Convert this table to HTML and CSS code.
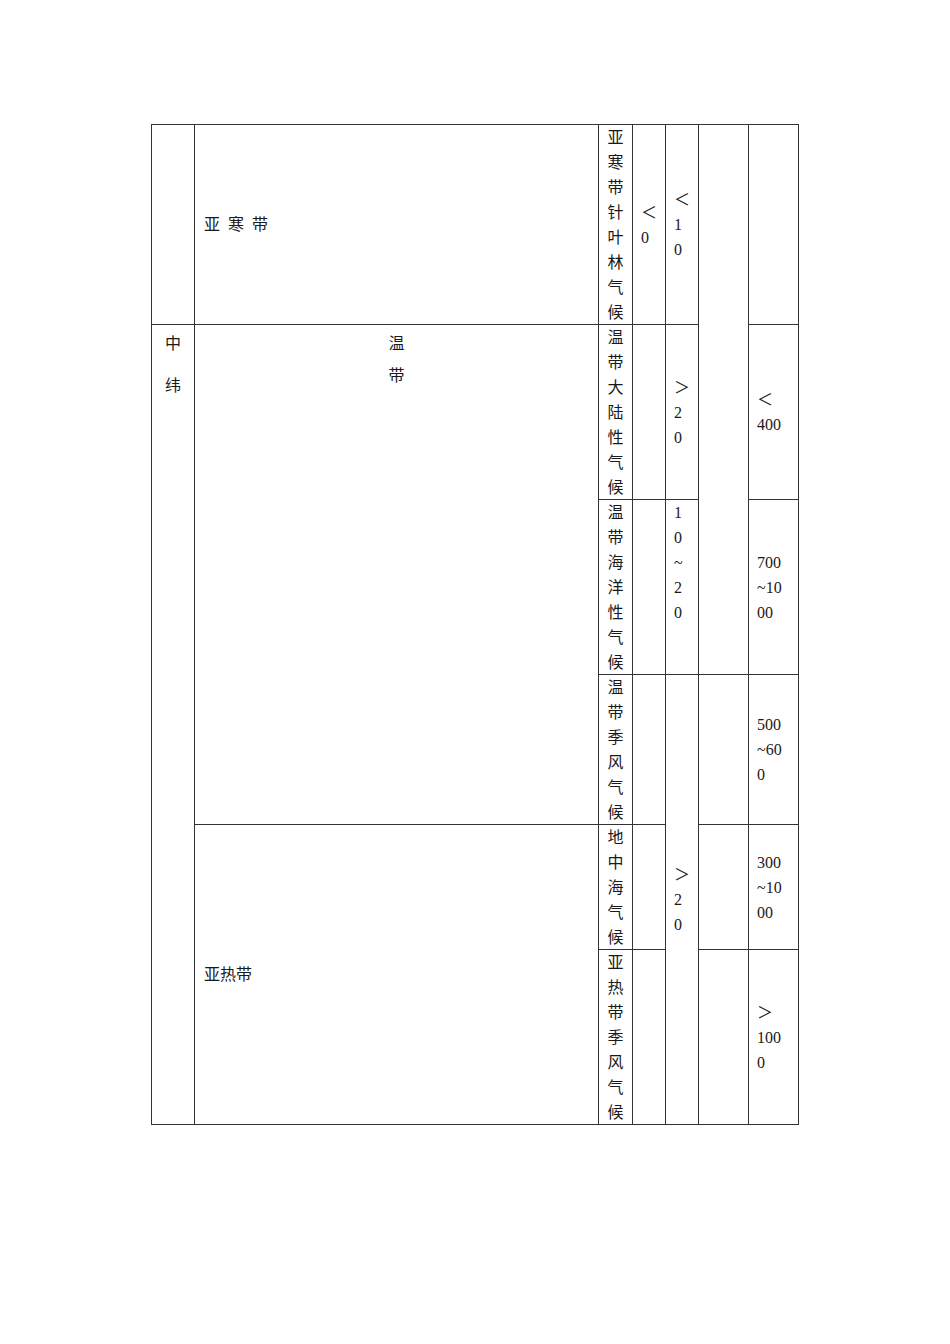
FILE: index.html
```html
<!DOCTYPE html>
<html lang="zh">
<head>
<meta charset="utf-8">
<title>气候类型表</title>
<link rel="stylesheet" href="styles.css">
</head>
<body>
<div class="page">
  <table class="climate-table">
    <colgroup>
      <col class="c-lat">
      <col class="c-zone">
      <col class="c-type">
      <col class="c-n1">
      <col class="c-n2">
      <col class="c-n3">
      <col class="c-n4">
    </colgroup>
    <tr class="r1">
      <td></td>
      <td class="zone mid"><span class="spaced">亚 寒 带</span></td>
      <td class="type"><div class="vt">亚寒带针叶林气候</div></td>
      <td class="num mid">＜<br>0</td>
      <td class="num mid">＜<br>1<br>0</td>
      <td rowspan="3"></td>
      <td></td>
    </tr>
    <tr class="r2">
      <td rowspan="5" class="lat top"><p class="l1">中</p><p class="l2">纬</p></td>
      <td rowspan="3" class="zone top center"><p class="w1">温</p><p class="w2">带</p></td>
      <td class="type"><div class="vt">温带大陆性气候</div></td>
      <td></td>
      <td class="num mid">＞<br>2<br>0</td>
      <td class="num mid">＜<br>400</td>
    </tr>
    <tr class="r3">
      <td class="type"><div class="vt">温带海洋性气候</div></td>
      <td></td>
      <td class="num top">1<br>0<br>~<br>2<br>0</td>
      <td class="num mid">700<br>~10<br>00</td>
    </tr>
    <tr class="r4">
      <td class="type"><div class="vt">温带季风气候</div></td>
      <td></td>
      <td rowspan="3" class="num mid">＞<br>2<br>0</td>
      <td></td>
      <td class="num mid">500<br>~60<br>0</td>
    </tr>
    <tr class="r5">
      <td rowspan="2" class="zone mid">亚热带</td>
      <td class="type"><div class="vt">地中海气候</div></td>
      <td></td>
      <td></td>
      <td class="num mid">300<br>~10<br>00</td>
    </tr>
    <tr class="r6">
      <td class="type"><div class="vt">亚热带季风气候</div></td>
      <td></td>
      <td></td>
      <td class="num mid">＞<br>100<br>0</td>
    </tr>
  </table>
</div>
</body>
</html>
```
FILE: styles.css
```css
html, body {
  margin: 0;
  background: #ffffff;
}

body {
  font-family: "Liberation Serif", "Noto Sans CJK SC", serif;
  font-size: 16px;
  color: #1a1a1a;
}

.page {
  padding: 124px 0 0 151px;
}

.climate-table {
  border-collapse: collapse;
  table-layout: fixed;
  width: 647px;
}

.c-lat { width: 43px; }
.c-zone { width: 404px; }
.c-type { width: 34px; }
.c-n1 { width: 33px; }
.c-n2 { width: 33px; }
.c-n3 { width: 50px; }
.c-n4 { width: 50px; }

.climate-table td {
  border: 1px solid #333333;
  padding: 0 8px;
  line-height: 25px;
  vertical-align: middle;
  word-break: break-all;
}

.r1 { height: 199px; }
.r2 { height: 174px; }
.r3 { height: 174px; }
.r4 { height: 149px; }
.r5 { height: 124px; }
.r6 { height: 175px; }

.climate-table td.mid { vertical-align: middle; }
.climate-table td.top { vertical-align: top; }

.climate-table td.type {
  vertical-align: top;
  text-align: center;
  padding: 0 2px;
}

.vt {
  margin-bottom: -1px;
}

.climate-table td.zone {
  padding: 0 9px;
}

.climate-table td.center {
  text-align: center;
}

.spaced {
  word-spacing: 4px;
}

.climate-table td.lat {
  text-align: center;
  padding: 0;
}

.lat p, .zone p {
  margin: 0;
  line-height: 25px;
}

.lat .l1 { padding-top: 6px; }
.lat .l2 { margin-top: 17px; }

.zone .w1 { padding-top: 6px; }
.zone .w2 { margin-top: 7px; }
```
